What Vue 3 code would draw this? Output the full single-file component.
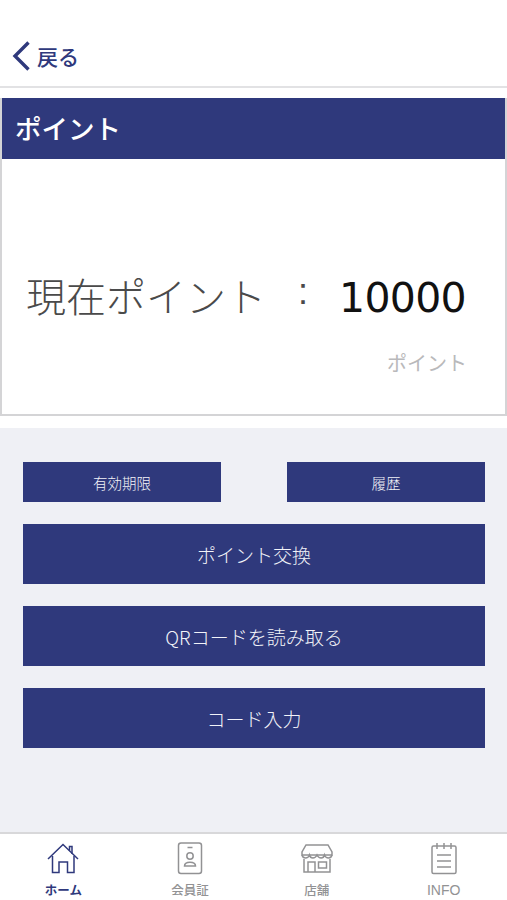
<script setup>
const tabs = [
  { label: 'ホーム', icon: 'home', active: true },
  { label: '会員証', icon: 'card' },
  { label: '店舗', icon: 'store' },
  { label: 'INFO', icon: 'info', latin: true },
]
const wideButtons = ['ポイント交換', 'QRコードを読み取る', 'コード入力']
</script>

<template>
  <div class="page">
    <header class="topbar">
      <button class="back">
        <svg class="chev" viewBox="0 0 20 30" width="20" height="30"><path d="M17.5 1.5 L4 15 L17.5 28.5" fill="none" stroke="#2f397c" stroke-width="3.4" /></svg>
        <span>戻る</span>
      </button>
    </header>

    <section class="card">
      <h1 class="card-title">ポイント</h1>
      <div class="card-body">
        <div class="points">
          <span class="points-label">現在ポイント</span>
          <span class="colon">:</span>
          <span class="points-value">10000</span>
        </div>
        <div class="unit">ポイント</div>
      </div>
    </section>

    <main class="actions">
      <div class="small-row">
        <button class="btn small">有効期限</button>
        <button class="btn small">履歴</button>
      </div>
      <button v-for="b in wideButtons" :key="b" class="btn wide">{{ b }}</button>
    </main>

    <nav class="tabbar">
      <div v-for="t in tabs" :key="t.label" class="tab" :class="{ active: t.active }">
        <svg class="icon" viewBox="0 0 34 34" width="34" height="34" fill="none" stroke="currentColor" stroke-width="1.5">
          <template v-if="t.icon === 'home'">
            <path d="M2 17 L17 2.5 L32 17" />
            <path d="M23.5 8.5 V4.5 H26 V12" />
            <path d="M6.5 14 V30.5 H13 V20 H21.5 V30.5 H28 V14" />
          </template>
          <template v-else-if="t.icon === 'card'">
            <rect x="5.5" y="1" width="23" height="30.5" rx="2.5" />
            <path d="M14.5 5.5 H19.5" />
            <circle cx="17" cy="14" r="3.2" />
            <path d="M11.5 24 C11.5 19 22.5 19 22.5 24 Z" />
          </template>
          <template v-else-if="t.icon === 'store'">
            <path d="M6 3 H28 L32 10 V13 H2 V10 Z" />
            <path d="M2 13 C3 17 8 17 9.5 13 C10.5 17 15 17 17 13 C19 17 23.5 17 24.5 13 C26 17 31 17 32 13" />
            <path d="M4 17 V30 H30 V17" />
            <path d="M8 30 V20 H15 V30" />
            <rect x="18.5" y="20" width="8" height="6" />
          </template>
          <template v-else>
            <rect x="5" y="4" width="24" height="27.5" rx="1.5" />
            <path d="M10 1 V7 M17 1 V7 M24 1 V7" />
            <path d="M10 13 H24 M10 19 H24 M10 25 H24" />
          </template>
        </svg>
        <span class="tab-label" :class="{ latin: t.latin }">{{ t.label }}</span>
      </div>
    </nav>
  </div>
</template>

<style>
html, body { margin: 0; background: #fff; }
</style>

<style scoped>
.page {
  width: 507px;
  height: 900px;
  display: flex;
  flex-direction: column;
  background: #fff;
  font-family: "Noto Sans CJK JP", "Noto Sans", sans-serif;
  overflow: hidden;
}
.topbar {
  height: 88px;
  box-sizing: border-box;
  border-bottom: 2px solid #e2e2e4;
  display: flex;
  align-items: flex-end;
  padding: 0 0 15px 11px;
}
.back {
  display: flex;
  align-items: center;
  gap: 6px;
  background: none;
  border: 0;
  padding: 0;
  font: inherit;
  font-size: 21px;
  font-weight: 500;
  color: #2f397c;
  line-height: 30px;
}
.card {
  margin-top: 10px;
  height: 318px;
  box-sizing: border-box;
  border: 2px solid #d4d4d6;
  border-top: 0;
  display: flex;
  flex-direction: column;
}
.card-title {
  margin: 0;
  height: 61px;
  background: #2f397c;
  color: #fff;
  font-size: 26.5px;
  font-weight: 500;
  line-height: 59px;
  padding-left: 13px;
}
.card-body {
  flex: 1;
  padding: 106px 38px 0 24px;
}
.points {
  display: flex;
  align-items: center;
  height: 60px;
}
.points-label { font-size: 40px; color: #4a4a4a; font-weight: 300; }
.colon { font-family: "Liberation Sans", sans-serif; font-size: 36px; color: #4a4a4a; margin-left: 32px; position: relative; top: -3px; }
.points-value { font-size: 41px; color: #111; font-family: "DejaVu Sans", sans-serif; letter-spacing: -0.7px; margin-left: auto; margin-right: 1px; position: relative; top: 3px; }
.unit {
  text-align: right;
  color: #b9b9bb;
  font-size: 20px;
  margin-top: 23px;
}
.actions {
  margin-top: 12px;
  flex: 1;
  background: #eff0f5;
  padding: 34px 22px 0 23px;
  display: flex;
  flex-direction: column;
  gap: 22px;
}
.small-row { display: flex; justify-content: space-between; }
.btn {
  border: 0;
  background: #2f397c;
  color: #f2f3f8;
  font: inherit;
  font-weight: 300;
  padding: 0;
}
.small { width: 198px; height: 40px; font-size: 14.5px; }
.wide { height: 60px; font-size: 19px; }
.tabbar {
  height: 66px;
  border-top: 2px solid #d8d8da;
  display: grid;
  grid-template-columns: repeat(4, 1fr);
  background: #fff;
}
.tab {
  display: flex;
  flex-direction: column;
  align-items: center;
  color: #929294;
  padding-top: 8px;
}
.tab.active { color: #2f397c; }
.tab-label { font-size: 12.5px; line-height: 18px; margin-top: 5px; font-weight: 500; }
.tab.active .tab-label { font-weight: 700; }
.tab-label.latin { font-family: "Liberation Sans", sans-serif; font-size: 14px; font-weight: 400; }
</style>
